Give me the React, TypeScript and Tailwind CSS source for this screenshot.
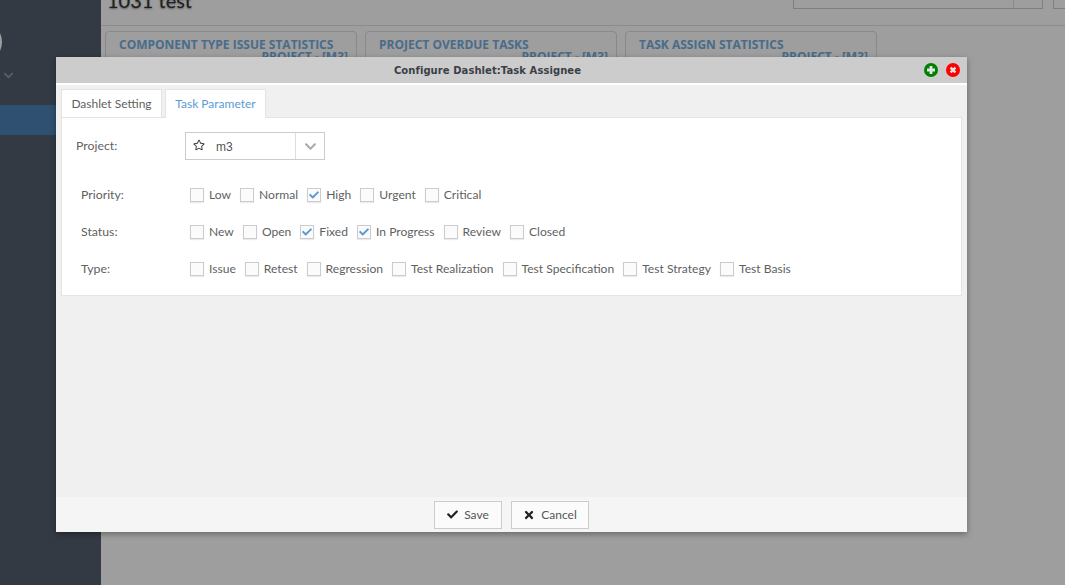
import React from 'react';
import { FaCheck, FaChevronDown, FaRegStar, FaTimes } from 'react-icons/fa';

// 背景卡片
const CARDS = ['COMPONENT TYPE ISSUE STATISTICS', 'PROJECT OVERDUE TASKS', 'TASK ASSIGN STATISTICS'];

const ROWS = [
  { label: 'Priority:', items: [['Low', 0], ['Normal', 0], ['High', 1], ['Urgent', 0], ['Critical', 0]] },
  { label: 'Status:', items: [['New', 0], ['Open', 0], ['Fixed', 1], ['In Progress', 1], ['Review', 0], ['Closed', 0]] },
  {
    label: 'Type:',
    items: [['Issue', 0], ['Retest', 0], ['Regression', 0], ['Test Realization', 0], ['Test Specification', 0], ['Test Strategy', 0], ['Test Basis', 0]],
  },
] as const;

function CheckItem({ label, checked }: { label: string; checked: boolean }) {
  return (
    <label className="flex items-center gap-[5px] text-[12.1px]">
      <span className="w-[14px] h-[14px] border border-[#ccc] bg-[#fbfbfb] flex items-center justify-center shadow-[0_1px_1px_rgba(0,0,0,0.08)]">
        {checked && <FaCheck size={10} className="text-[#5b9bd5]" />}
      </span>
      <span className="pt-px">{label}</span>
    </label>
  );
}

function RoundIcon({ color, rotate }: { color: string; rotate?: boolean }) {
  return (
    <svg width="14" height="14" viewBox="0 0 14 14">
      <circle cx="7" cy="7" r="7" fill={color} />
      <path
        d="M5.6 3h2.8v2.6H11v2.8H8.4V11H5.6V8.4H3V5.6h2.6z"
        fill="#e4e4e4"
        transform={rotate ? 'rotate(45 7 7) translate(7 7) scale(0.85) translate(-7 -7)' : undefined}
      />
    </svg>
  );
}

export default function App() {
  return (
    <div className="relative h-[585px] w-[1065px] overflow-hidden flex font-['Lato','Noto_Sans',sans-serif] bg-white">
      <aside className="w-[101px] bg-[#545e6e] pt-[22px] shrink-0 overflow-hidden">
        <div className="w-[40px] h-[40px] -ml-[38px] rounded-full bg-white" />
        <FaChevronDown size={11} className="ml-[3px] mt-[8px] text-[#8f98a6]" />
        <div className="h-[30px] mt-[24px] bg-[#4c81b5]" />
      </aside>
      <main className="flex-1 min-w-0">
        <div className="h-[26px] border-b border-[#e2e2e2] flex justify-between pl-[6px]">
          <h1 className="text-[20px] leading-[20px] -mt-[10px] text-[#333] [text-shadow:0_1px_2px_rgba(0,0,0,0.45)]">1031 test</h1>
          <div className="flex gap-[10px] h-[9px]">
            <div className="w-[250px] border border-[#ccc] border-t-0 flex justify-end">
              <div className="w-[29px] border-l border-[#ddd]" />
            </div>
            <div className="w-[30px] -mr-[18px] border border-[#ccc] border-t-0" />
          </div>
        </div>
        <div className="flex gap-[8px] pl-[4px] pt-[5px]">
          {CARDS.map((c) => (
            <div key={c} className="w-[252px] h-[80px] border border-[#ddd] rounded-[4px] pl-[13px] pr-[8px] pt-[6px]">
              <div className="font-['Open_Sans',sans-serif] text-[12px] leading-[14px] font-bold text-[#76aee0] whitespace-nowrap">{c}</div>
              <div className="font-['Open_Sans',sans-serif] text-right text-[12px] leading-[10px] font-bold text-[#76aee0] whitespace-nowrap">PROJECT - [M3]</div>
            </div>
          ))}
        </div>
      </main>

      {/* 遮罩 + 對話框 */}
      <div className="absolute inset-0 bg-black/[0.38]" />
      <div className="absolute left-[56px] top-[57px] w-[911px] h-[475px] bg-[#f0f0f0] flex flex-col shadow-[0_2px_6px_rgba(0,0,0,0.35)] text-[12px] text-[#5f5f5f]">
        <div className="h-[28px] bg-[#ccc] border-b-2 border-white flex items-center">
          <span className="flex-1 text-center font-['DejaVu_Sans',sans-serif] font-bold text-[10px] tracking-[0.07px] text-[#3a3f47]">Configure Dashlet:Task Assignee</span>
          <div className="w-[48px] flex justify-end gap-[8px] pr-[7px]">
            <RoundIcon color="#008000" />
            <RoundIcon color="#ff0000" rotate />
          </div>
        </div>
        <div className="flex-1 px-[5px] pt-[4px]">
          <div className="flex gap-[3px] h-[28px]">
            <div className="w-[101px] bg-white border border-[#e4e4e4] border-b-0 flex items-center justify-center">Dashlet Setting</div>
            <div className="w-[101px] bg-white border border-[#e4e4e4] border-b-0 flex items-center justify-center text-[#5b9bd5] relative z-10 -mb-px">Task Parameter</div>
          </div>
          <div className="bg-white border border-[#e4e4e4] h-[179px] pl-[14px]">
            <div className="flex items-center pt-[14px] h-[42px]">
              <div className="w-[109px] text-[12.3px]">Project:</div>
              <div className="w-[140px] h-[28px] border border-[#ccc] flex items-center text-[#555]">
                <FaRegStar size={12} className="ml-[7px] mb-[2px] text-[#444]" />
                <span className="ml-[11px] pt-[1px] flex-1 font-['Liberation_Sans',sans-serif]">m3</span>
                <div className="w-[29px] h-full border-l border-[#ddd] flex items-center justify-center">
                  <FaChevronDown size={13} className="text-[#aaa]" />
                </div>
              </div>
            </div>
            <div className="pl-[5px] pt-[27px] flex flex-col gap-[22px]">
              {ROWS.map((r) => (
                <div key={r.label} className="flex items-center h-[15px]">
                  <div className="w-[109px] text-[12.3px] pt-px">{r.label}</div>
                  <div className="flex gap-[9px]">
                    {r.items.map(([l, c]) => (
                      <CheckItem key={l} label={l} checked={c === 1} />
                    ))}
                  </div>
                </div>
              ))}
            </div>
          </div>
        </div>
        <div className="h-[35px] bg-[#f5f5f5] flex justify-center items-center gap-[9px] text-[#555]">
          <button className="h-[28px] w-[68px] border border-[#ccc] bg-[#fbfbfb] flex items-center justify-center gap-[6px]"><FaCheck size={11} className="text-[#222]" />Save</button>
          <button className="h-[28px] w-[78px] border border-[#ccc] bg-[#fbfbfb] flex items-center justify-center gap-[6px]"><FaTimes size={12} className="text-[#222]" />Cancel</button>
        </div>
      </div>
    </div>
  );
}
